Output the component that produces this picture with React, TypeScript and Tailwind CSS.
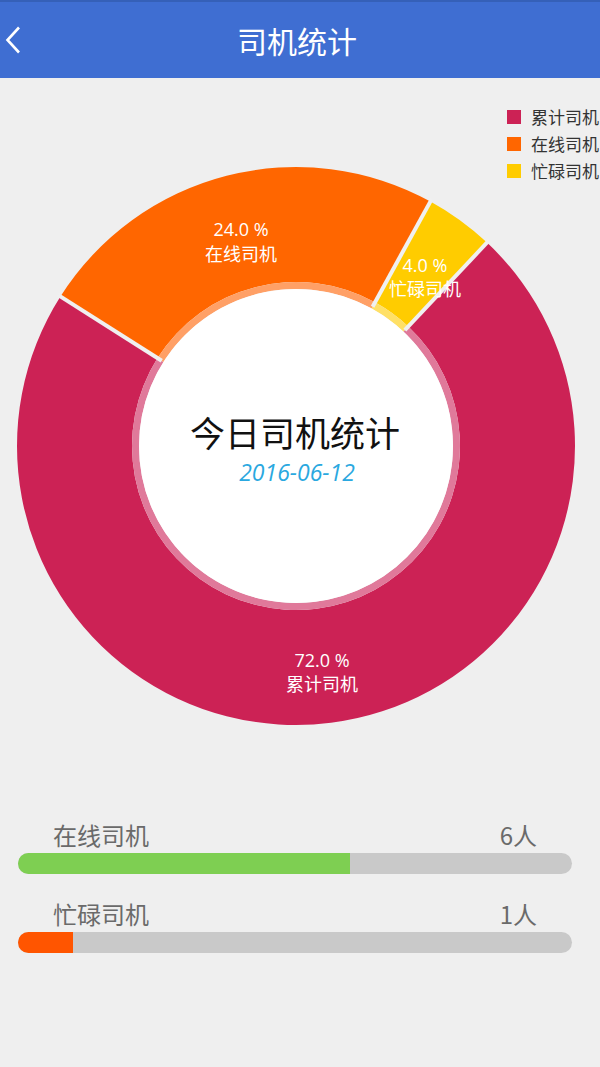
import React from "react";

const CX = 296;
const CY = 368;
const R_OUT = 279;
const R_BAND = 164;
const R_IN = 157;

function pt(a: number, r: number): [number, number] {
  const rad = (a * Math.PI) / 180;
  return [CX + r * Math.sin(rad), CY - r * Math.cos(rad)];
}

function sector(a1: number, a2: number, r1: number, r2: number) {
  const large = a2 - a1 > 180 ? 1 : 0;
  const [x1, y1] = pt(a1, r2);
  const [x2, y2] = pt(a2, r2);
  const [x3, y3] = pt(a2, r1);
  const [x4, y4] = pt(a1, r1);
  return `M ${x1} ${y1} A ${r2} ${r2} 0 ${large} 1 ${x2} ${y2} L ${x3} ${y3} A ${r1} ${r1} 0 ${large} 0 ${x4} ${y4} Z`;
}

const slices = [
  { a1: 43.2, a2: 302.4, color: "#cc2255", band: "#e0799a" },
  { a1: 302.4, a2: 388.8, color: "#ff6600", band: "#ffa066" },
  { a1: 388.8, a2: 403.2, color: "#ffcc00", band: "#ffe066" },
];

const boundaries = [43.2, 302.4, 28.8];

const FONT = { fontFamily: '"Open Sans", "Noto Sans CJK SC", sans-serif' };

function Chart() {
  return (
    <svg width={600} height={700} viewBox="0 0 600 700" className="block">
      {slices.map((s, i) => (
        <g key={i}>
          <path d={sector(s.a1, s.a2, R_BAND, R_OUT)} fill={s.color} />
          <path d={sector(s.a1, s.a2, R_IN, R_BAND)} fill={s.band} />
        </g>
      ))}
      <circle cx={CX} cy={CY} r={R_IN} fill="#ffffff" />
      {boundaries.map((a, i) => {
        const [x1, y1] = pt(a, R_IN + 2);
        const [x2, y2] = pt(a, R_OUT + 3);
        return <line key={i} x1={x1} y1={y1} x2={x2} y2={y2} stroke="#f0f0f0" strokeWidth={4} />;
      })}
      <g fill="#ffffff" fontSize={18} textAnchor="middle" style={FONT}>
        <text x={241} y={158}>24.0 %</text>
        <text x={241} y={183}>在线司机</text>
        <text x={425} y={194}>4.0 %</text>
        <text x={425} y={218}>忙碌司机</text>
        <text x={322} y={589}>72.0 %</text>
        <text x={322} y={613}>累计司机</text>
      </g>
      <text x={295} y={369} textAnchor="middle" fontSize={35} fill="#111111" style={FONT}>
        今日司机统计
      </text>
      <text
        x={297}
        y={403}
        textAnchor="middle"
        fontSize={23}
        fontStyle="italic"
        fill="#2aa8e0"
        style={FONT}
      >
        2016-06-12
      </text>
    </svg>
  );
}

function Legend() {
  const items = [
    { label: "累计司机", color: "bg-[#cc2255]" },
    { label: "在线司机", color: "bg-[#ff6600]" },
    { label: "忙碌司机", color: "bg-[#ffcc00]" },
  ];
  return (
    <div className="absolute left-[507px] top-[29px] flex flex-col gap-[7px]">
      {items.map((it) => (
        <div key={it.label} className="flex items-center gap-[10px] h-[20px]">
          <div className={`w-[14px] h-[14px] shrink-0 ${it.color}`} />
          <span className="text-[17px] leading-[20px] text-[#333333] whitespace-nowrap">{it.label}</span>
        </div>
      ))}
    </div>
  );
}

function Bar({ label, value, pct, fill }: { label: string; value: string; pct: number; fill: string }) {
  return (
    <div className="flex flex-col">
      <div className="flex items-end justify-between pl-[35px] pr-[35px] h-[30px]">
        <span className="text-[24px] leading-[30px] text-[#6a6a6a]">{label}</span>
        <span className="text-[24px] leading-[30px] text-[#6a6a6a]">{value}</span>
      </div>
      <div className="mt-[3px] h-[21px] rounded-full bg-[#c9c9c9] overflow-hidden flex">
        <div className={`h-full ${fill}`} style={{ width: `${pct}%` }} />
      </div>
    </div>
  );
}

export default function App() {
  return (
    <div
      className="w-[600px] h-[1067px] bg-[#efefef] flex flex-col overflow-hidden"
      style={{ fontFamily: '"Noto Sans CJK SC", "Noto Sans", sans-serif' }}
    >
      <header className="h-[78px] bg-[#3f6ed2] border-t-2 border-[#3560b8] flex items-center relative shrink-0">
        <div className="w-[40px] flex items-center pl-[5px]">
          <svg width="16" height="28" viewBox="0 0 16 28" fill="none">
            <path d="M14 1.5 L2.5 14 L14 26.5" stroke="#ffffff" strokeWidth="2.6" strokeLinejoin="miter" />
          </svg>
        </div>
        <div className="flex-1 flex justify-center pr-[40px] -ml-[6px]">
          <span className="text-[30px] leading-none text-white">司机统计</span>
        </div>
      </header>
      <div className="relative h-[700px] shrink-0">
        <Chart />
        <Legend />
      </div>
      <div className="flex flex-col gap-[25px] pl-[18px] pr-[28px] pt-[42px]">
        <Bar label="在线司机" value="6人" pct={60} fill="bg-[#7ecf52]" />
        <Bar label="忙碌司机" value="1人" pct={10} fill="bg-[#ff5500]" />
      </div>
    </div>
  );
}
